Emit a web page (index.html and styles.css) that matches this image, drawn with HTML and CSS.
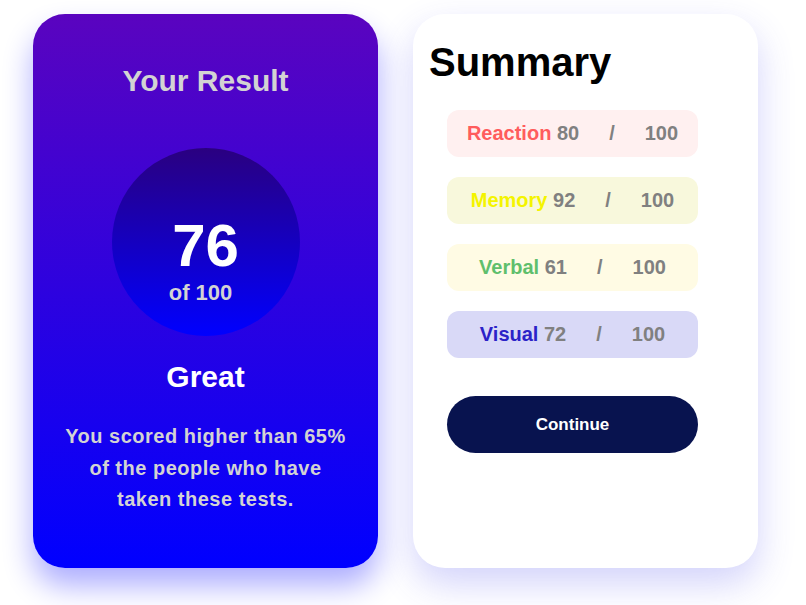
FILE: index.html
```html
<!DOCTYPE html>
<html lang="en">
<head>
<meta charset="utf-8">
<title>Results summary</title>
<link rel="stylesheet" href="styles.css">
</head>
<body>
<main class="page">
  <section class="result-card">
    <h2 class="result-title">Your Result</h2>
    <div class="score-circle">
      <span class="score">76</span>
      <span class="score-of">of 100</span>
    </div>
    <h3 class="grade">Great</h3>
    <p class="result-text">You scored higher than 65% of the people who have taken these tests.</p>
  </section>
  <section class="summary-card">
    <h1 class="summary-title">Summary</h1>
    <div class="rows">
      <div class="row row-reaction"><span class="label">Reaction</span>&nbsp;<span class="num">80</span><span class="sep">/</span><span class="num">100</span></div>
      <div class="row row-memory"><span class="label">Memory</span>&nbsp;<span class="num">92</span><span class="sep">/</span><span class="num">100</span></div>
      <div class="row row-verbal"><span class="label">Verbal</span>&nbsp;<span class="num">61</span><span class="sep">/</span><span class="num">100</span></div>
      <div class="row row-visual"><span class="label">Visual</span>&nbsp;<span class="num">72</span><span class="sep">/</span><span class="num">100</span></div>
      <button class="continue" type="button">Continue</button>
    </div>
  </section>
</main>
</body>
</html>
```
FILE: styles.css
```css
* { box-sizing: border-box; }

html, body {
  margin: 0;
  background: #ffffff;
  font-family: "Liberation Sans", Arial, sans-serif;
}

.page {
  display: flex;
  gap: 35px;
  padding: 14px 0 37px 33px;
  min-height: 605px;
}

.result-card {
  width: 345px;
  height: 554px;
  border-radius: 32px;
  background: linear-gradient(to bottom, #5a04bf 0%, #0000ff 100%);
  box-shadow: 0 18px 30px rgba(0, 0, 255, 0.32);
  display: flex;
  flex-direction: column;
  align-items: center;
  padding-top: 50px;
}

.result-title {
  margin: 0;
  font-size: 30px;
  line-height: 34px;
  font-weight: 700;
  color: #d3d3d3;
}

.score-circle {
  margin-top: 50px;
  width: 188px;
  height: 188px;
  border-radius: 50%;
  background: linear-gradient(to bottom, #2a0080 0%, #0000ff 100%);
  display: flex;
  flex-direction: column;
  align-items: center;
  justify-content: center;
  padding-top: 36px;
}

.score {
  font-size: 60px;
  line-height: 60px;
  font-weight: 700;
  color: #ffffff;
}

.score-of {
  margin-top: 5px;
  margin-right: 10px;
  font-size: 22px;
  line-height: 24px;
  font-weight: 700;
  color: #d3d3d3;
}

.grade {
  margin: 24px 0 0;
  font-size: 30px;
  line-height: 34px;
  font-weight: 700;
  color: #ffffff;
}

.result-text {
  margin: 27px 0 0;
  padding: 0 28px;
  text-align: center;
  font-size: 20px;
  line-height: 31.5px;
  letter-spacing: 0.5px;
  font-weight: 700;
  color: #d3d3d3;
}

.summary-card {
  width: 345px;
  height: 554px;
  border-radius: 32px;
  background: #ffffff;
  box-shadow: 0 16px 36px rgba(70, 70, 240, 0.24);
  padding: 0 16px;
}

.summary-title {
  margin: 26px 0 0;
  font-size: 40px;
  line-height: 44px;
  font-weight: 700;
  color: #000000;
}

.rows {
  margin: 26px 0 0 18px;
  width: 251px;
  display: flex;
  flex-direction: column;
  gap: 20px;
}

.row {
  height: 47px;
  border-radius: 12px;
  display: flex;
  align-items: center;
  justify-content: center;
  font-size: 20px;
  font-weight: 700;
  color: #808080;
}

.sep { margin: 0 30px; }

.row-reaction { background: #fff0f0; }
.row-reaction .label { color: #ff5c5c; }
.row-memory { background: #f8f8dc; }
.row-memory .label { color: #f4f400; }
.row-verbal { background: #fffbe4; }
.row-verbal .label { color: #5fbf6c; }
.row-visual { background: #d9d9f7; }
.row-visual .label { color: #2b22c8; }

.continue {
  margin-top: 18px;
  height: 57px;
  width: 251px;
  border: 0;
  border-radius: 30px;
  background: #08134f;
  color: #ffffff;
  font-family: "Liberation Sans", Arial, sans-serif;
  font-size: 17px;
  font-weight: 700;
}
```
